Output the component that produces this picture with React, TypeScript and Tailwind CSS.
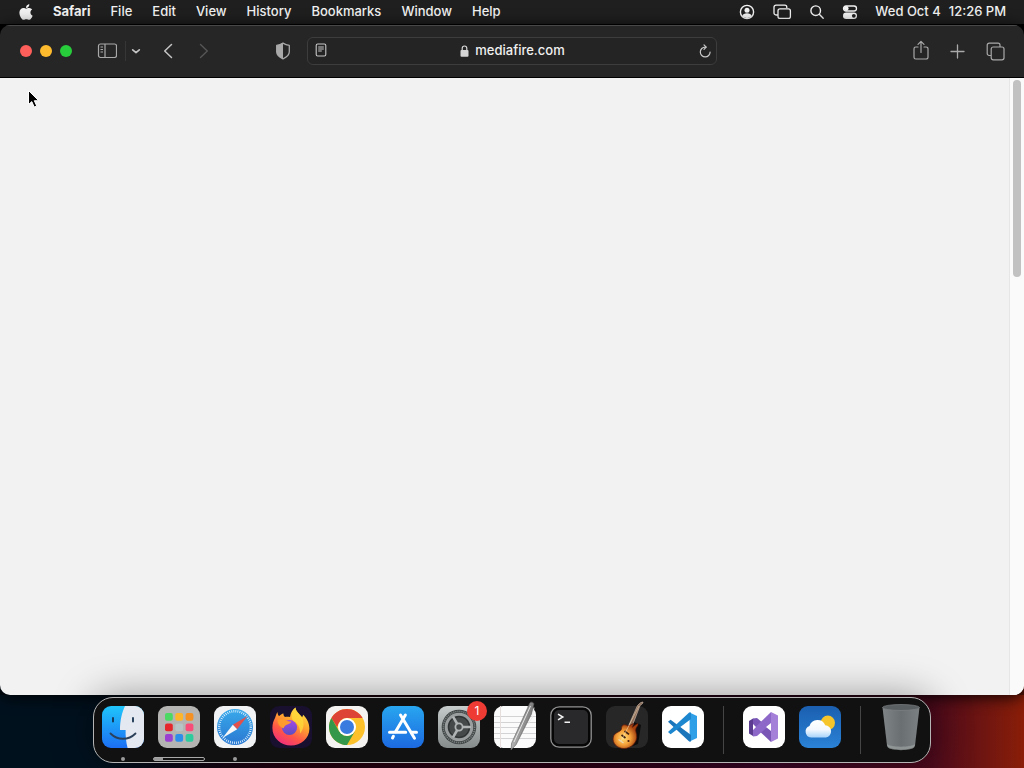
import React from "react";
import { FaApple } from "react-icons/fa";

const menus = ["File", "Edit", "View", "History", "Bookmarks", "Window", "Help"];

function MenuBar() {
  return (
    <header className="flex h-[25px] shrink-0 items-center justify-between border-b border-black bg-[#1f1f1f] pr-[18px] pl-[19px] text-[13px] font-medium text-[#f2f2f2]">
      <nav className="flex items-center gap-5">
        <button aria-label="Apple menu" className="-mt-px">
          <FaApple className="h-[18px] w-[14px]" />
        </button>
        <button className="font-bold">Safari</button>
        {menus.map((name) => (
          <button key={name}>{name}</button>
        ))}
      </nav>

      <div className="flex items-center gap-[17px]">
        <button aria-label="User">
          <svg className="h-4 w-4" viewBox="0 0 16 16" fill="none">
            <circle cx="8" cy="8" r="6.6" stroke="currentColor" strokeWidth="1.4" />
            <circle cx="8" cy="6.2" r="2.5" fill="currentColor" />
            <path d="M3.2 12.2c.6-2 2.500-2.900 4.800-2.900s4.200.9 4.800 2.900A6.500 6.500 0 0 1 8 14a6.500 6.500 0 0 1-4.800-1.800Z" fill="currentColor" />
          </svg>
        </button>
        <button aria-label="Screen mirroring">
          <svg className="h-4 w-5" viewBox="0 0 20 16" fill="none" stroke="currentColor" strokeWidth="1.300">
            <path d="M6 11H4a2 2 0 0 1-2-2V3.200a2 2 0 0 1 2-2h8.800a2 2 0 0 1 2 2V4" />
            <rect x="6" y="4.800" width="12.400" height="9.600" rx="2" />
          </svg>
        </button>
        <button aria-label="Spotlight">
          <svg className="h-4 w-4" viewBox="0 0 16 16" fill="none" stroke="currentColor" strokeWidth="1.400" strokeLinecap="round">
            <circle cx="6.700" cy="6.700" r="4.800" />
            <path d="m10.300 10.300 3.900 3.900" />
          </svg>
        </button>
        <button aria-label="Control Center">
          <svg className="h-4 w-4" viewBox="0 0 16 16" fill="none">
            <rect x="1.500" y="2" width="13" height="5" rx="2.500" stroke="currentColor" strokeWidth="1.300" />
            <circle cx="4.200" cy="4.500" r="2.400" fill="currentColor" />
            <rect x="1" y="8.600" width="14" height="6.400" rx="3.200" fill="currentColor" />
            <circle cx="11.800" cy="11.800" r="1.900" fill="#1f1f1f" />
          </svg>
        </button>
        <time className="flex gap-2">
          <span>Wed Oct 4</span>
          <span>12:26 PM</span>
        </time>
      </div>
    </header>
  );
}

function Toolbar() {
  return (
    <div className="grid h-[53px] shrink-0 grid-cols-[3fr_4fr_3fr] items-center border-t border-b border-t-[#484848] border-b-black bg-[#262626] pb-px text-[#a9a9a9]">
      <div className="flex items-center pr-4 pl-5">
        <div className="flex gap-2">
          <button aria-label="Close" className="h-3 w-3 rounded-full bg-[#ff5f5a]" />
          <button aria-label="Minimize" className="h-3 w-3 rounded-full bg-[#ffbb2e]" />
          <button aria-label="Zoom" className="h-3 w-3 rounded-full bg-[#28cd3c]" />
        </div>
        <button aria-label="Sidebar" className="ml-[25px]">
          <svg className="h-4 w-5" viewBox="0 0 20 16" fill="none" stroke="currentColor" strokeWidth="1.200">
            <rect x="1.500" y="1" width="18" height="13.500" rx="2" />
            <path d="M8 1v13.500M3.500 4h2.500M3.500 6.500h2.500M3.500 9h2.500" />
          </svg>
        </button>
        <span className="ml-2 h-5 w-px bg-[#363636]" />
        <button aria-label="Tab groups" className="ml-[5px]">
          <svg className="h-4 w-[10px]" viewBox="0 0 10 16" fill="none" stroke="#c4c4c4" strokeWidth="1.700" strokeLinecap="round" strokeLinejoin="round">
            <path d="m1.700 6.800 3.300 2.800 3.300-2.800" />
          </svg>
        </button>
        <button aria-label="Back" className="ml-[22px]">
          <svg className="h-4 w-[10px]" viewBox="0 0 10 16" fill="none" stroke="#c4c4c4" strokeWidth="1.500" strokeLinecap="round" strokeLinejoin="round">
            <path d="M8.500 1.500 1.700 8l6.800 6.500" />
          </svg>
        </button>
        <button aria-label="Forward" className="ml-[26px]" disabled>
          <svg className="h-4 w-[10px]" viewBox="0 0 10 16" fill="none" stroke="#555" strokeWidth="1.400" strokeLinecap="round" strokeLinejoin="round">
            <path d="M1.500 1.500 8.300 8l-6.800 6.500" />
          </svg>
        </button>
        <button aria-label="Privacy report" className="ml-auto">
          <svg className="h-[18px] w-4" viewBox="0 0 16 18" fill="none">
            <path d="M8 1.100c2 1.300 4 2 6.300 2.300v6.400c0 3.200-3 5.600-6.300 7-3.300-1.400-6.300-3.800-6.300-7V3.400C4 3.100 6 2.400 8 1.100Z" stroke="currentColor" strokeWidth="1.300" strokeLinejoin="round" />
            <path d="M8 1.100v15.700c-3.300-1.400-6.300-3.800-6.300-7V3.400C4 3.100 6 2.400 8 1.100Z" fill="currentColor" />
          </svg>
        </button>
      </div>

      <div className="flex h-7 items-center justify-between rounded-md border border-[#3d3d3d] bg-[#242424] pr-1 pl-[7px]">
        <button aria-label="Reader">
          <svg className="-mt-[3px] h-[14px] w-3" viewBox="0 0 12 14" fill="none" stroke="#c8c8c8" strokeWidth="1.100">
            <rect x="1.200" y="1" width="9.600" height="12" rx="1.500" />
            <path d="M3.200 4h5.600M3.200 6h5.600M3.200 8h3.600" />
          </svg>
        </button>
        <label className="flex items-center gap-[6px] text-[#f0f0f0]">
          <svg className="h-3 w-[9px]" viewBox="0 0 9 12" fill="none" aria-label="Address">
            <path d="M2.200 5.500V3.300a2.300 2.300 0 0 1 4.600 0v2.200" stroke="#d6d6d6" strokeWidth="1.200" />
            <rect x=".5" y="5" width="8" height="6.700" rx="1" fill="#d6d6d6" />
          </svg>
          <input
            className="field-sizing-content bg-transparent text-[13px] font-medium outline-none"
            defaultValue="mediafire.com"
          />
        </label>
        <button aria-label="Reload">
          <svg className="h-[14px] w-[14px]" viewBox="0 0 14 14" fill="none" stroke="#c8c8c8" strokeWidth="1.200" strokeLinecap="round" strokeLinejoin="round">
            <path d="M8 3.100H7.200A4.900 4.900 0 1 0 12.100 8" />
            <path d="M6 .9 8.200 3.100 6 5.300" />
          </svg>
        </button>
      </div>

      <div className="flex items-center justify-end gap-[21px] pr-[19px]">
        <button aria-label="Share">
          <svg className="-mt-[2px] h-5 w-4" viewBox="0 0 16 20" fill="none" stroke="currentColor" strokeWidth="1.200" strokeLinecap="round" strokeLinejoin="round">
            <path d="M5 7H2.800A1.800 1.800 0 0 0 1 8.800v8.400A1.800 1.800 0 0 0 2.800 19h10.400a1.800 1.800 0 0 0 1.800-1.800V8.800A1.800 1.800 0 0 0 13.200 7H11" />
            <path d="M8 12.500V1.500M5 4.300l3-3 3 3" />
          </svg>
        </button>
        <button aria-label="New tab">
          <svg className="h-[15px] w-[15px]" viewBox="0 0 15 15" stroke="currentColor" strokeWidth="1.300" strokeLinecap="round">
            <path d="M7.500 1v13M1 7.500h13" />
          </svg>
        </button>
        <button aria-label="Show tabs">
          <svg className="h-[19px] w-[19px]" viewBox="0 0 19 19" fill="none" stroke="currentColor" strokeWidth="1.200">
            <path d="M5 13.500H3.200A2 2 0 0 1 1.200 11.500V3.200a2 2 0 0 1 2-2h8.800a2 2 0 0 1 2 2v1.800" />
            <rect x="5.200" y="5" width="12.800" height="12.800" rx="2" />
          </svg>
        </button>
      </div>
    </div>
  );
}

function Finder() {
  return (
    <svg viewBox="0 0 42 42">
      <defs>
        <linearGradient id="finder" x1="0" y1="0" x2="0" y2="1">
          <stop stopColor="#1fc5fb" />
          <stop offset="1" stopColor="#1c6ff3" />
        </linearGradient>
        <clipPath id="finderClip">
          <rect width="42" height="42" rx="9" />
        </clipPath>
      </defs>
      <g clipPath="url(#finderClip)">
        <rect width="42" height="42" fill="url(#finder)" />
        <path d="M23 0c-3 6.500-5 14-5 24h5.600c-.1 6 .4 12 2 18H42V0Z" fill="#e4e8f0" />
      </g>
      <path d="M11 12v3.500M31 12v3.500" stroke="#14304d" strokeWidth="1.800" strokeLinecap="round" />
      <path d="M8.500 27.500c7 7 18 7 25 0" fill="none" stroke="#2b4059" strokeWidth="1.800" strokeLinecap="round" />
    </svg>
  );
}

const tiles = ["#4bd964", "#fdb62b", "#f59023", "#e5262b", "#b7c4c6", "#f84d78", "#9b3fd1", "#2d8eea", "#2ecb9d"];

function Launchpad() {
  return (
    <svg viewBox="0 0 42 42">
      <rect width="42" height="42" rx="9" fill="#b4b4b3" />
      {tiles.map((fill, i) => (
        <rect key={fill} x={7 + (i % 3) * 10.3} y={7 + Math.floor(i / 3) * 10.5} width="7.800" height="7.800" rx="2" fill={fill} />
      ))}
    </svg>
  );
}

function Safari() {
  return (
    <svg viewBox="0 0 42 42">
      <defs>
        <linearGradient id="safari" x1="0" y1="0" x2="0" y2="1">
          <stop stopColor="#38a9ea" />
          <stop offset="1" stopColor="#2a78d2" />
        </linearGradient>
      </defs>
      <rect width="42" height="42" rx="9" fill="#f1f2f4" />
      <circle cx="21" cy="21" r="18" fill="url(#safari)" />
      <circle cx="21" cy="21" r="15.800" fill="none" stroke="#e5f3ff" strokeWidth="2.400" strokeDasharray=".8 1.268" />
      <path d="M33.500 10 18.800 18.700l4.400 4.600Z" fill="#e2504c" />
      <path d="M8.500 32 18.800 18.700l4.400 4.600Z" fill="#f7f7f7" />
    </svg>
  );
}

function Firefox() {
  return (
    <svg viewBox="0 0 42 42">
      <defs>
        <linearGradient id="foxBody" x1=".85" y1="0" x2=".3" y2="1">
          <stop stopColor="#fff04a" />
          <stop offset=".4" stopColor="#ffa52e" />
          <stop offset=".72" stopColor="#ff5548" />
          <stop offset="1" stopColor="#f02f7c" />
        </linearGradient>
        <linearGradient id="foxGlobe" x1="0" y1="0" x2="0" y2="1">
          <stop stopColor="#a448e6" />
          <stop offset="1" stopColor="#5a4fc0" />
        </linearGradient>
      </defs>
      <rect width="42" height="42" rx="9" fill="#18102e" />
      <path d="M5 12c.8-2.500 1.500-4.500 2.300-6 .3 1.800.9 3.200 1.700 4.200 1.300-1.300 3-2.400 4.500-2.700-.2 1.500.3 2.700 1.500 3.600 1.700-.6 3.500-.6 5 0C20.300 8 22 4 25.500 1.500c.3 4.300 4 6.500 6.600 9.700.5-.6.900-1.400 1-2.400 3.400 3.300 6.300 8 6.300 13.900C39.400 32.500 31 39.500 21 39.500S2.400 32.300 2.400 22c0-4 1-7.200 2.600-10Z" fill="url(#foxBody)" />
      <circle cx="19.500" cy="21.500" r="7.600" fill="url(#foxGlobe)" />
      <path d="M7.500 14c3-1.600 6-1.200 8.500.2 1.600 1 3 1.200 5.300 1.300-.5 2-2.800 2.400-4.500 3.300-1.500.8-2.500 1.500-3.200 3.500-3.500-1-5.900-4-6.100-8.300Z" fill="#ff9a2c" />
      <path d="M25.500 1.500c.3 4.300 5 6.500 7 11 2.200 5 1 11-2.500 15 .5-7-3-10.500-6.500-12.500-3-2.500-2-9.500 2-13.500Z" fill="#ffd83b" opacity=".8" />
    </svg>
  );
}

function Chrome() {
  return (
    <svg viewBox="0 0 42 42">
      <rect width="42" height="42" rx="9" fill="#f4f2f0" />
      <circle cx="21" cy="21" r="18" fill="#fbc02a" />
      <path d="M5.412 12A18 18 0 0 1 36.588 12H21a9 9 0 0 0-7.800 4.500L11 21Z" fill="#dd4435" />
      <path d="M5.412 12A18 18 0 0 0 21 39l7.800-13.500-6 4.400-5-.5-4.600-3.900Z" fill="#34974a" />
      <circle cx="21" cy="21" r="9" fill="#fff" />
      <circle cx="21" cy="21" r="7" fill="#3a7be0" />
    </svg>
  );
}

function AppStore() {
  return (
    <svg viewBox="0 0 42 42">
      <defs>
        <linearGradient id="store" x1="0" y1="0" x2="0" y2="1">
          <stop stopColor="#28a6f0" />
          <stop offset="1" stopColor="#1c69e0" />
        </linearGradient>
      </defs>
      <rect width="42" height="42" rx="9" fill="url(#store)" />
      <g stroke="#fff" strokeWidth="3" strokeLinecap="round">
        <path d="m23.400 9-9.700 16.600M18.500 9l14 23.200M11.400 30.300 10.500 32" />
        <path d="M7.500 26.200h16.200M29.500 26.200h5" />
      </g>
    </svg>
  );
}

function Settings() {
  return (
    <svg viewBox="0 0 42 42">
      <defs>
        <linearGradient id="settings" x1="0" y1="0" x2="0" y2="1">
          <stop stopColor="#c6cbcc" />
          <stop offset="1" stopColor="#858a8b" />
        </linearGradient>
      </defs>
      <rect width="42" height="42" rx="9" fill="url(#settings)" />
      <circle cx="21" cy="21" r="17.300" fill="#3c4142" />
      <circle cx="21" cy="21" r="15.700" fill="none" stroke="#7b8081" strokeWidth="1.600" strokeDasharray="1.200 .85" />
      <circle cx="21" cy="21" r="12.800" fill="#35393a" stroke="#9a9e9f" strokeWidth="3" />
      <circle cx="21" cy="21" r="10.300" fill="#45494a" stroke="#2f3233" strokeWidth="1" />
      <path d="M21 21h12M21 21l-6-10.400M21 21l-6 10.400" stroke="#b0b4b4" strokeWidth="2.600" />
      <circle cx="21" cy="21" r="3.600" fill="#45494a" stroke="#b0b4b4" strokeWidth="1.800" />
    </svg>
  );
}

function TextEdit() {
  return (
    <svg viewBox="0 0 42 42" overflow="visible">
      <defs>
        <linearGradient id="pen" x1="0" y1="0" x2="1" y2=".4">
          <stop stopColor="#d8d8d8" />
          <stop offset=".5" stopColor="#a0a0a0" />
          <stop offset="1" stopColor="#707070" />
        </linearGradient>
      </defs>
      <rect width="42" height="42" rx="9" fill="#fbfbfb" />
      <path d="M0 10.500h42M0 16.500h42M0 21.500h42M0 27.500h42M0 32.500h42" stroke="#d3d3d6" />
      <path d="M6.500 0v42" stroke="#e6dddd" />
      <path d="M35.800-3c.8-1.700 4.400-.7 4 1.200L37.500 8 22 38.800l-5 5.200.6-6.800Z" fill="url(#pen)" stroke="#5a5a5a" strokeWidth=".6" />
      <path d="M36.500 0 20 36M40 1.500 38.500 11 34 18" stroke="#eee" strokeWidth=".9" fill="none" />
    </svg>
  );
}

function Terminal() {
  return (
    <svg viewBox="0 0 42 42">
      <rect x=".8" y=".8" width="40.400" height="40.400" rx="8.500" fill="#060606" stroke="#929292" strokeWidth="1.300" />
      <rect x="4" y="4" width="34" height="34" rx="5" fill="#29292b" />
      <path d="m8 8.200 4.800 2.800-4.800 2.800M14.500 16.200h5.500" fill="none" stroke="#f4f4f4" strokeWidth="1.500" />
    </svg>
  );
}

function GarageBand() {
  return (
    <svg viewBox="0 0 42 42" overflow="visible">
      <defs>
        <radialGradient id="guitar" cx=".42" cy=".58" r=".55">
          <stop stopColor="#ffe07a" />
          <stop offset=".5" stopColor="#f5a13a" />
          <stop offset="1" stopColor="#a3400f" />
        </radialGradient>
      </defs>
      <rect width="42" height="42" rx="9" fill="#272727" />
      <path d="m28 16 7 3-3 19-8 3Z" fill="#0c0c0c" />
      <path d="M22 21 31.500-.5l3-2.800 2.500-.7-.5 1.500-2.500 2L25 23Z" fill="#8b6a55" stroke="#c9b5a6" strokeWidth=".7" />
      <path d="M16 20c1.500-1.800 4-1.300 5.500-.3l3-.7 3-1.700-1.200 4 5.200-3.800c.8.8.6 1.800-.1 2.600-2.700 3-1.500 5.200-.8 8.600 1.400 7.400-5.600 13.800-12.600 13.800C11 42.500 5.800 37 7.300 31c1.300-5 6.700-4.600 8-7.500.5-1.200 0-2.300.7-3.500Z" fill="url(#guitar)" stroke="#5b1709" strokeWidth=".7" />
      <path d="m15.500 29 4 3M18.500 25l4.500 3.400" stroke="#41200f" strokeWidth="1.700" />
      <path d="m12.500 33.500 5 3.500" stroke="#e8d9b6" strokeWidth="1.200" />
      <circle cx="22.500" cy="35" r="1.100" fill="#4a1d0b" />
      <path d="m15 35 18-35" stroke="#f9e8c5" strokeWidth=".5" />
    </svg>
  );
}

function Code() {
  return (
    <svg viewBox="0 0 42 42">
      <rect width="42" height="42" rx="9" fill="#fff" />
      <path d="M27.600 6.500 35 10v22l-7.400 3.500Z" fill="#2f9fe8" />
      <path d="m6 15.800 2.600-2.100 20.400 15.300v6.500h-1.800Z" fill="#1b75bb" />
      <path d="m6 26 2.600 2.300L29 13V6.500h-1.800Z" fill="#1c86cf" />
    </svg>
  );
}

function VisualStudio() {
  return (
    <svg viewBox="0 0 42 42">
      <rect width="42" height="42" rx="9" fill="#fff" />
      <path d="m6 15 4-2.500 4 2-4 3v7l4 3-4 2.500-4-2.500Z" fill="#5b3c91" />
      <path d="m10 12.500 4-.5 14 12v12L10 19Z" fill="#7956b6" />
      <path d="m10 30.500 4-.5 14-12V6L10 23.500Z" fill="#8d68c8" />
      <path d="m28 6 7 3.500V32.500L28 36Z" fill="#a580d8" />
      <path d="m28 17-5 4 5 4Z" fill="#fff" />
      <path d="m10 18 3 3-3 3Z" fill="#fff" />
    </svg>
  );
}

function Weather() {
  return (
    <svg viewBox="0 0 42 42">
      <defs>
        <linearGradient id="sky" x1="0" y1="0" x2="0" y2="1">
          <stop stopColor="#1b5fb0" />
          <stop offset="1" stopColor="#2a82d6" />
        </linearGradient>
        <linearGradient id="cloud" x1="0" y1="0" x2="0" y2="1">
          <stop stopColor="#fff" />
          <stop offset=".55" stopColor="#f4f9ff" />
          <stop offset="1" stopColor="#a8d4fa" />
        </linearGradient>
      </defs>
      <rect width="42" height="42" rx="9" fill="url(#sky)" />
      <circle cx="28.800" cy="16.800" r="7.200" fill="#f6c52c" />
      <path d="M12 31.500a6 6 0 0 1-1.500-11.600 8.300 8.300 0 0 1 15.700-.7 6.200 6.200 0 0 1 .8 12.300Z" fill="url(#cloud)" />
    </svg>
  );
}

function Trash() {
  return (
    <svg viewBox="0 0 42 42" overflow="visible">
      <defs>
        <linearGradient id="bin" x1="0" y1="0" x2="1" y2="0">
          <stop stopColor="#7f8486" />
          <stop offset=".5" stopColor="#6a6f71" />
          <stop offset="1" stopColor="#7b8082" />
        </linearGradient>
      </defs>
      <path d="M2.500 1.500h37L35 39.500c-.8 5.500-27.200 5.500-28 0Z" fill="url(#bin)" />
      <path d="M7 38c3 3.500 25 3.500 28 0l-.8 3.500c-3 3.500-23.400 3.500-26.400 0Z" fill="#a4a8a9" opacity=".6" />
      <ellipse cx="21" cy="1.500" rx="18.500" ry="3" fill="#5a5f61" stroke="#7f8385" strokeWidth=".7" />
    </svg>
  );
}

type DockItem = {
  name: string;
  icon: () => React.JSX.Element;
  running?: boolean;
  badge?: number;
  progress?: number;
};

const dock: DockItem[][] = [
  [
    { name: "Finder", icon: Finder, running: true },
    { name: "Launchpad", icon: Launchpad, progress: 18 },
    { name: "Safari", icon: Safari, running: true },
    { name: "Firefox", icon: Firefox },
    { name: "Chrome", icon: Chrome },
    { name: "App Store", icon: AppStore },
    { name: "System Settings", icon: Settings, badge: 1 },
    { name: "TextEdit", icon: TextEdit },
    { name: "Terminal", icon: Terminal },
    { name: "GarageBand", icon: GarageBand },
    { name: "Code", icon: Code },
  ],
  [
    { name: "Visual Studio", icon: VisualStudio },
    { name: "Weather", icon: Weather },
  ],
  [{ name: "Trash", icon: Trash }],
];

function Dock() {
  return (
    <footer className="z-10 mx-auto mt-[2px] mb-[5px] flex shrink-0 gap-[14px] rounded-[20px] border border-[#b5b5b5] bg-[#111] px-2 pt-2 pb-px shadow-[0_0_40px_rgba(0,0,0,0.4)]">
      {dock.map((group, i) => (
        <React.Fragment key={i}>
          {i > 0 && <span className="mx-[5px] h-12 w-px bg-[#454545]" />}
          {group.map(({ name, icon: Icon, running, badge, progress }) => (
            <div key={name} className="flex w-[42px] flex-col items-center gap-[9px]">
              <button aria-label={name} className="relative block h-[42px] w-[42px]">
                <Icon />
                {badge && (
                  <span className="absolute -top-[5px] -right-[7px] flex h-5 w-5 items-center justify-center rounded-full bg-[#ee3b34] text-xs text-white">
                    {badge}
                  </span>
                )}
              </button>
              <div className="flex h-1 items-center justify-center">
                {running && <span className="h-1 w-1 rounded-full bg-[#9b9b9b]" />}
                {progress && (
                  <span className="h-1 w-[52px] shrink-0 rounded-xs border border-[#a8a8a8]">
                    <span className="block h-full bg-[#9a9a9a]" style={{ width: `${progress}%` }} />
                  </span>
                )}
              </div>
            </div>
          ))}
        </React.Fragment>
      ))}
    </footer>
  );
}

export default function App() {
  return (
    <div className="relative flex h-screen flex-col overflow-hidden bg-[linear-gradient(to_right,#00111e_10%,#24000f_28%,#2b0014_55%,#3a0526_75%,#4c0a1c_91%,#8a1e08)] font-[Inter,sans-serif] select-none">
      <MenuBar />

      <main className="flex min-h-0 flex-1 flex-col bg-linear-to-b from-black from-10% to-black/40">
        <section className="flex min-h-0 flex-1 flex-col overflow-hidden rounded-[10px] shadow-[0_2px_16px_rgba(0,0,0,0.9)]">
          <Toolbar />
          <div className="flex flex-1 bg-[#f2f2f2]">
            <div className="flex-1" />
            <div className="w-[15px] border-l border-[#e6e6e6] bg-[#fafafa] px-[3px] pt-[2px]">
              <div className="h-[32%] rounded-full bg-[#c1c1c1]" />
            </div>
          </div>
        </section>
      </main>

      <Dock />

      <svg className="absolute top-[89px] left-[27px] z-20 h-5 w-[14px]" viewBox="0 0 14 20">
        <path d="M1.500 1.500v14l3.300-2.900 2.400 5.400 2.500-1.100-2.400-5.200h4.400Z" fill="#000" stroke="#fff" strokeWidth="1" />
      </svg>
    </div>
  );
}
